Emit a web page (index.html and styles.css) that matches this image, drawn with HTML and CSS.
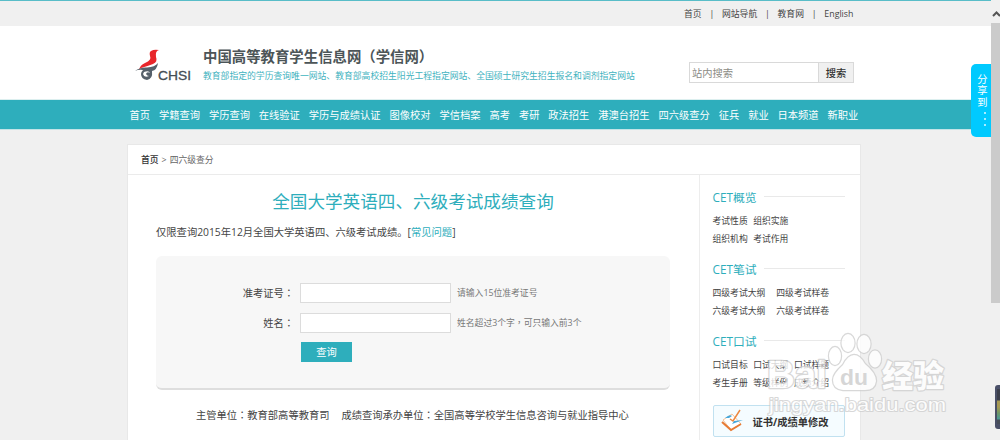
FILE: index.html
```html
<!DOCTYPE html>
<html lang="zh-CN">
<head>
<meta charset="utf-8">
<title>全国大学英语四、六级考试成绩查询</title>
<link rel="stylesheet" href="styles.css">
</head>
<body>
<div class="topbar"><div class="toplinks"><a>首页</a><i>|</i><a>网站导航</a><i>|</i><a>教育网</a><i>|</i><a>English</a></div></div>
<header class="header">
  <svg class="logo" width="60" height="36" viewBox="0 0 60 36">
    <path fill="#e8262b" d="M16 3Q19 1 24 2Q20 3 21 9Q23 14 18 16Q13 18 6 20L4 22Q5 17 10 15Q17 12 15 8Q14 4 16 3Z"/>
    <path fill="#55606a" d="M0 23Q5 19 12 19.5Q20 19 23 15Q22 22 17 23Q18 31 12 32Q6 31 6 26Q6 24 8 22Q4 21 0 23Z"/>
    <path fill="#fff" d="M9 24Q14 22 15 25Q12 23 11 26Q12 28 14 28Q9 30 8 26Z"/>
    <text class="logo-text" x="23" y="32" textLength="33" lengthAdjust="spacingAndGlyphs">CHSI</text>
  </svg>
  <div class="brand"><h1>中国高等教育学生信息网（学信网）</h1><p>教育部指定的学历查询唯一网站、教育部高校招生阳光工程指定网站、全国硕士研究生招生报名和调剂指定网站</p></div>
  <div class="search"><span class="search-box">站内搜索</span><span class="search-btn">搜索</span></div>
</header>
<nav class="nav"><div class="nav-in"><a>首页</a><a>学籍查询</a><a>学历查询</a><a>在线验证</a><a>学历与成绩认证</a><a>图像校对</a><a>学信档案</a><a>高考</a><a>考研</a><a>政法招生</a><a>港澳台招生</a><a>四六级查分</a><a>征兵</a><a>就业</a><a>日本频道</a><a>新职业</a></div></nav>
<div class="page">
  <div class="crumb"><b>首页</b><span>&gt;</span><span>四六级查分</span></div>
  <div class="cols">
    <main class="main">
      <h2>全国大学英语四、六级考试成绩查询</h2>
      <p class="notice">仅限查询2015年12月全国大学英语四、六级考试成绩。[<a>常见问题</a>]</p>
      <div class="form">
        <div class="row"><label>准考证号<span class="mid" lang="zh-TW">：</span></label><span class="field"></span><small>请输入15位准考证号</small></div>
        <div class="row"><label>姓名<span class="mid" lang="zh-TW">：</span></label><span class="field"></span><small>姓名超过3个字<span class="mid" lang="zh-TW">，</span>可只输入前3个</small></div>
        <div class="submit">查询</div>
      </div>
      <p class="foot"><span>主管单位<span class="mid" lang="zh-TW">：</span>教育部高等教育司</span><span>成绩查询承办单位<span class="mid" lang="zh-TW">：</span>全国高等学校学生信息咨询与就业指导中心</span></p>
    </main>
    <aside class="side">
      <section><h3>CET概览</h3><p><a>考试性质</a><a>组织实施</a></p><p><a>组织机构</a><a>考试作用</a></p></section>
      <section class="wide"><h3>CET笔试</h3><p><a>四级考试大纲</a><a>四级考试样卷</a></p><p><a>六级考试大纲</a><a>六级考试样卷</a></p></section>
      <section><h3>CET口试</h3><p><a>口试目标</a><a>口试大纲</a><a>口试样题</a></p><p><a>考生手册</a><a>等级样例</a><a>成绩介绍</a></p></section>
      <div class="banner">
        <svg width="24" height="24" viewBox="0 0 24 24" fill="none">
          <path d="M2 11L11 5L20 15L10 21Z" fill="#fff" stroke="#f3b27c" stroke-width=".8"/>
          <path d="M1 13L10 21L20 15" stroke="#e77b35" stroke-width="2"/>
          <path d="M19 1L12 12L9 10" stroke="#ed873e" stroke-width="1.5"/>
          <path d="M4 9Q9 5 11 7L8 9ZM22 11L11 15L13 12Z" fill="#45a7dc"/>
        </svg>
        <b>证书/成绩单修改</b>
      </div>
    </aside>
  </div>
</div>
<div class="share"><span>分</span><span>享</span><span>到</span><i></i><i></i><i></i></div>
<div class="scroll">
  <svg width="9" height="23" viewBox="0 0 9 23"><path d="M2 16L5.5 12.5L9 16" fill="none" stroke="#555" stroke-width="2"/></svg>
  <div class="thumb"></div>
</div>
<div class="gadget"><i></i></div>
<svg class="mark" width="200" height="92" viewBox="760 330 200 92">
  <g class="mark-ink">
    <text x="767" y="388" font-size="38" textLength="60" lengthAdjust="spacingAndGlyphs">Bai</text>
    <ellipse cx="848" cy="343" rx="6.5" ry="9"/><ellipse cx="864" cy="344" rx="6.5" ry="9"/><ellipse cx="835" cy="356" rx="6" ry="9"/><ellipse cx="875" cy="359" rx="6" ry="8.5"/>
    <path d="M854 355Q860 355 865 364Q876 373 876 381Q875 390 865 390H843Q833 389 833 380Q833 374 843 365Q848 355 854 355Z"/>
    <text class="mark-cn" x="882" y="387" font-size="31" textLength="62" lengthAdjust="spacingAndGlyphs">经验</text>
    <text class="mark-url" x="769" y="411" font-size="19" textLength="177" lengthAdjust="spacingAndGlyphs">jingyan.baidu.com</text>
  </g>
  <text class="mark-du" x="840" y="385" font-size="22" textLength="28" lengthAdjust="spacingAndGlyphs">du</text>
</svg>
</body>
</html>
```
FILE: styles.css
```css
* { box-sizing: border-box; margin: 0; padding: 0; }
body { width: 1000px; height: 440px; overflow: hidden; position: relative; background: #f0f0f0; color: #444; font-family: "Open Sans", "Noto Sans CJK SC", sans-serif; font-size: 10.25px; white-space: nowrap; }
i { font-style: normal; }
.mid { font-family: "Noto Sans CJK TC", sans-serif; }
.topbar { width: 991px; height: 26px; border-top: 1px solid #58bdc8; }
.toplinks { display: flex; justify-content: space-between; width: 169.5px; margin-left: 684px; font-size: 8.8px; line-height: 26px; }
.header { display: flex; width: 991px; height: 74px; padding-left: 135px; background: #fff; border-bottom: 1px solid #dcefef; }
.logo { flex: none; margin-top: 22px; }
.logo-text { font: 13px "Liberation Sans", sans-serif; fill: #444d54; stroke: #444d54; stroke-width: .3; }
.brand { flex: none; width: 494px; padding: 20px 0 0 8px; }
.brand h1 { font-size: 14.4px; line-height: 21px; color: #4c5558; }
.brand p { font-size: 8.82px; line-height: 18px; color: #3fb3c0; }
.search { display: flex; width: 165px; height: 21px; margin-top: 36px; border: 1px solid #d9d9d9; line-height: 20px; }
.search-box { width: 128px; padding-left: 2px; color: #8b8b85; }
.search-btn { flex: 1; background: #f0f0f0; border-left: 1px solid #d9d9d9; text-align: center; font-weight: 500; color: #333; }
.nav { width: 991px; height: 30px; background: #2eaebc; border-bottom: 1px solid #c3e4e7; }
.nav-in { display: flex; justify-content: space-between; width: 729px; margin-left: 129.5px; line-height: 30px; color: #fff; }
.page { width: 734px; height: 300px; margin: 14px 0 0 127px; background: #fff; border: 1px solid #e8e8e8; border-bottom: 0; }
.crumb { display: flex; gap: 3px; height: 30px; padding-left: 13px; border-bottom: 1px solid #ebebeb; font-size: 8.8px; line-height: 30px; color: #666; }
.crumb b { font-weight: 500; color: #333; }
.cols { display: flex; height: 270px; }
.main { width: 571px; padding-left: 28px; }
.main h2 { width: 514px; margin-top: 13px; text-align: center; font-size: 17.6px; line-height: 26px; font-weight: 400; color: #2eaebc; }
.notice { margin-top: 9px; font-size: 10.3px; line-height: 18px; }
.notice a { color: #2eaebc; }
.form { width: 514px; height: 134px; margin-top: 15px; padding-top: 27px; background: #f7f7f7; border-bottom: 2px solid #dedede; border-radius: 6px; }
.row { display: flex; height: 21px; margin-bottom: 8.5px; line-height: 20px; }
.row label { width: 144px; padding-right: 6px; text-align: right; font-size: 10.25px; }
.field { width: 151px; height: 20px; background: #fff; border: 1px solid #dcdcdc; }
.row small { margin-left: 6px; font-size: 8.8px; color: #777; }
.submit { width: 51px; height: 20px; margin-left: 145px; background: #2eaebc; color: #fff; line-height: 20px; text-align: center; }
.foot { display: flex; gap: 12px; margin: 15px 0 0 40px; font-size: 10.28px; line-height: 20px; }
.side { flex: 1; padding: 10px 0 0 12.5px; border-left: 1px solid #ededed; }
.side section { height: 72px; }
.side h3 { display: flex; align-items: center; gap: 7px; height: 22px; margin-bottom: 5px; font-size: 11.8px; font-weight: 400; color: #2eaebc; }
.side h3::after { content: ""; width: 81px; height: 1px; background: #e9e9e9; }
.side p { display: flex; gap: 5.5px; font-size: 8.8px; line-height: 18px; }
.side .wide p { gap: 11px; }
.banner { display: flex; align-items: center; width: 132px; height: 32px; margin-top: 4px; padding-left: 7px; gap: 8px; background: #f5fcff; border: 1px solid #c1e1f0; border-radius: 2px; }
.banner b { font-size: 10.25px; color: #333; }
.share { position: absolute; left: 971px; top: 64px; width: 20px; height: 73px; padding: 10px 0 0 3px; display: flex; flex-direction: column; align-items: center; background: #00caff; border-radius: 5px 0 0 5px; color: #fff; line-height: 11.3px; }
.share i { width: 2px; height: 2px; margin: 4px 0 0 4px; background: #a8ecff; }
.scroll { position: absolute; right: 0; top: 0; width: 9px; height: 440px; background: #f0f0f0; }
.scroll svg { display: block; }
.thumb { height: 280px; background: #cbcbcb; }
.gadget { position: absolute; left: 995px; top: 385px; width: 8px; height: 44px; padding: 4px 0 0 2px; background: #4a5068; border-radius: 3px; }
.gadget i { display: block; height: 35px; background: linear-gradient(#3c3f4b 0 11px, #a79a53 12px 18px, #6f9867 24px, #4b9a96 30px, #484e58 31px); }
.mark { position: absolute; left: 760px; top: 330px; }
.mark-ink { fill: #fff; stroke: #cfcfcf; stroke-width: 2.4; stroke-linejoin: round; paint-order: stroke; opacity: .8; font-family: "Liberation Sans", "Noto Sans CJK SC", sans-serif; font-weight: 700; }
.mark-cn { font-family: "Noto Sans CJK SC", sans-serif; font-weight: 900; }
.mark-url { font-weight: 400; stroke-width: 2; }
.mark-du { font-family: "Liberation Sans", sans-serif; font-weight: 700; fill: #d6d6d6; }
```
